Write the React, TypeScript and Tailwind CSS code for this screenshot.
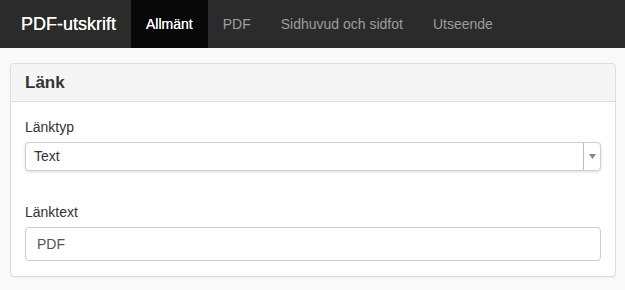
export default function App() {
  const tabs = [
    { label: "Allmänt", active: true },
    { label: "PDF", active: false },
    { label: "Sidhuvud och sidfot", active: false },
    { label: "Utseende", active: false },
  ];

  return (
    <div className="min-h-screen w-full bg-[#f9f9f9] font-['Liberation_Sans',Arial,sans-serif] text-[#333]">
      {/* navbar */}
      <nav className="flex h-[48px] items-stretch bg-[#2b2b2b]">
        <div className="flex items-center pl-[21px] pr-[15px] text-[18px] text-white [text-shadow:0_0_0.4px_#fff]">
          PDF-utskrift
        </div>
        <ul className="flex items-stretch">
          {tabs.map((tab) => (
            <li
              key={tab.label}
              className={
                tab.active
                  ? "flex items-center bg-[#080808] px-[15px] text-[14px] text-white [text-shadow:0_0_0.5px_#fff]"
                  : "flex items-center px-[15px] text-[14px] text-[#9d9d9d]"
              }
            >
              {tab.label}
            </li>
          ))}
        </ul>
      </nav>

      <main className="ml-[10px] mr-[9px] mt-[15px]">
        {/* panel */}
        <section className="rounded-[4px] border border-[#dddddd] bg-white shadow-[0_1px_1px_rgba(0,0,0,0.05)]">
          <div className="flex h-[38px] items-center rounded-t-[4px] border-b border-[#dddddd] bg-[#f5f5f5] px-[14px]">
            <h2 className="text-[17px] font-bold text-[#333]">Länk</h2>
          </div>

          <div className="flex flex-col px-[14px] pb-[15px] pt-[15px]">
            <label className="text-[14px] leading-[20px]">Länktyp</label>
            <div className="mt-[5px] flex h-[29px] items-stretch rounded-[4px] border border-[#cfcfcf] bg-white shadow-[0_1px_3px_rgba(0,0,0,0.15)]">
              <div className="flex flex-1 items-center pl-[8px] text-[14px] text-[#333]">
                Text
              </div>
              <div className="flex w-[17px] items-center justify-center border-l border-[#bbbbbb]">
                <svg width="7" height="5" viewBox="0 0 7 5">
                  <path d="M0 0 L7 0 L3.5 5 Z" fill="#888" />
                </svg>
              </div>
            </div>

            <label className="mt-[31px] text-[14px] leading-[20px]">Länktext</label>
            <div className="mt-[5px] flex h-[34px] items-center rounded-[4px] border border-[#cccccc] bg-white px-[11px] text-[14px] text-[#555]">
              PDF
            </div>
          </div>
        </section>
      </main>
    </div>
  );
}
